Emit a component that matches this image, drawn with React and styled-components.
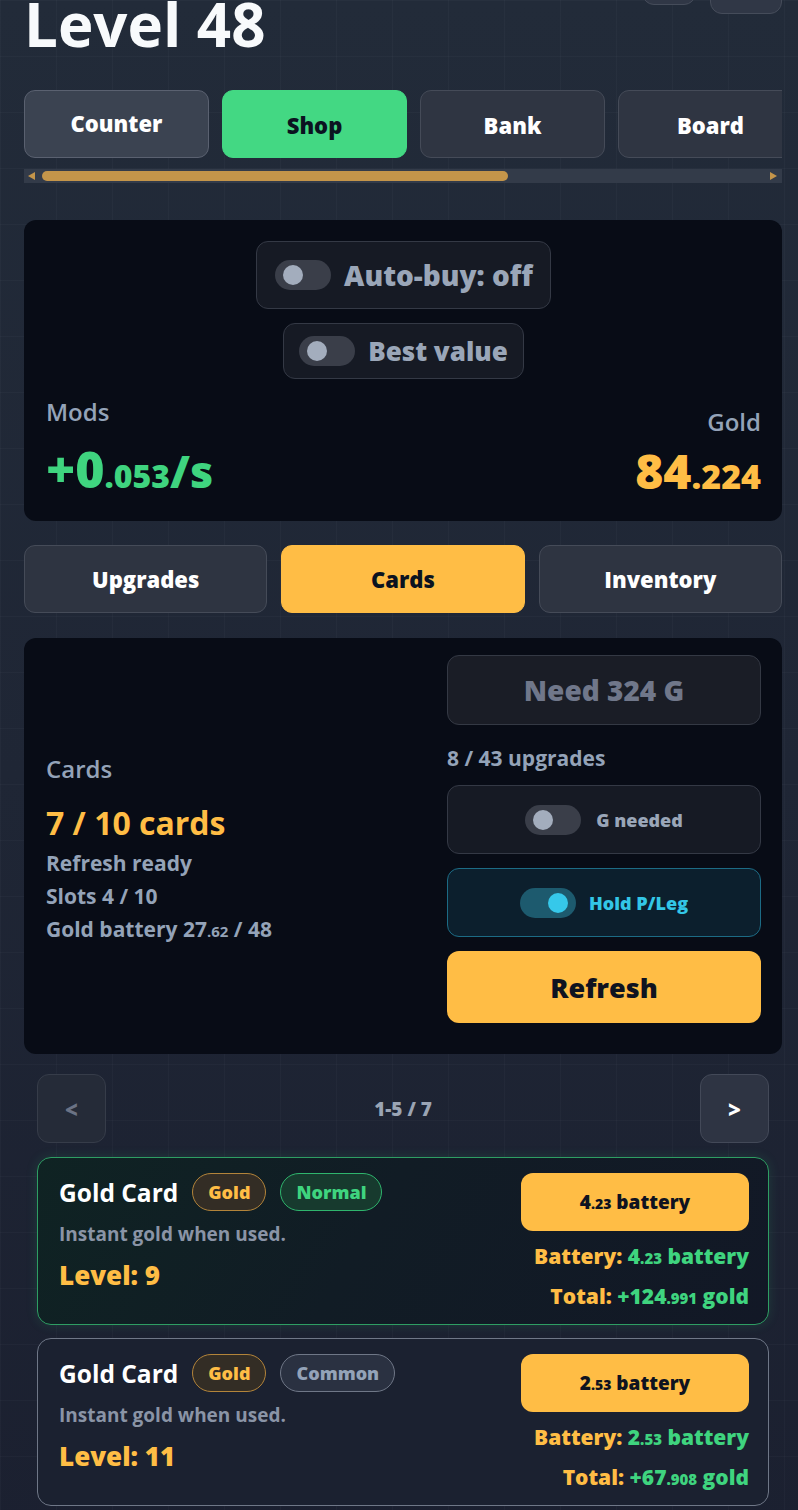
import React from 'react';
import styled, { createGlobalStyle } from 'styled-components';

const GlobalStyle = createGlobalStyle`
  html, body {
    margin: 0;
    padding: 0;
  }
  body {
    min-height: 1510px;
    font-family: "Open Sans", "Noto Sans", sans-serif;
    color: #f8fafc;
    background-color: #1e2533;
    background-image:
      linear-gradient(rgba(255, 255, 255, 0.022) 1px, transparent 1px),
      linear-gradient(90deg, rgba(255, 255, 255, 0.022) 1px, transparent 1px),
      linear-gradient(180deg, #222b39 0%, #1f2635 50%, #1b2030 100%);
    background-size: 56px 56px, 56px 56px, 100% 100%;
    overflow: hidden;
  }
  * { box-sizing: border-box; }
  button { font-family: inherit; }
`;

const GOLD = '#ffbd45';
const GREEN = '#3fd47f';
const MUTED = '#94a3b8';

const Page = styled.div`
  padding: 0 16px 40px 24px;
`;

const Header = styled.header`
  display: flex;
  justify-content: space-between;
  align-items: flex-start;
  margin-top: -6px;
`;

const Title = styled.h1`
  margin: 0;
  font-size: 60px;
  line-height: 60px;
  font-weight: 700;
  color: #f8fafc;
`;

const HeaderActions = styled.div`
  display: flex;
  gap: 14px;
  align-items: flex-start;
  margin-top: -39px;
`;

const HeaderButton = styled.button`
  width: ${p => p.$w}px;
  height: ${p => p.$h}px;
  border-radius: 12px;
  background: #303746;
  border: 1px solid #454c5a;
`;

const TabScroller = styled.nav`
  display: flex;
  gap: 13px;
  overflow: hidden;
  margin-top: 36px;
`;

const MainTab = styled.button`
  flex: 0 0 185px;
  height: 68px;
  border-radius: 11px;
  font-size: 22px;
  font-weight: 800;
  color: ${p => (p.$active ? '#0b1320' : '#ffffff')};
  background: ${p => (p.$active ? '#43d883' : p.$raised ? '#3b4351' : '#2f3542')};
  border: 1px solid ${p => (p.$active ? '#43d883' : p.$raised ? '#5a6170' : '#454b58')};
  padding-bottom: ${p => (p.$raised ? '4px' : '0')};
`;

const ScrollTrack = styled.div`
  display: flex;
  align-items: center;
  height: 14px;
  margin-top: 11px;
  padding: 0 5px 0 4px;
  background: #333b49;
`;

const Arrow = styled.span`
  width: 0;
  height: 0;
  border-top: 4px solid transparent;
  border-bottom: 4px solid transparent;
  ${p => (p.$dir === 'left' ? 'border-right: 7px solid #c4954a;' : 'border-left: 7px solid #c4954a;')}
  ${p => (p.$dir === 'right' ? 'margin-left: auto;' : '')}
`;

const Thumb = styled.span`
  width: 466px;
  height: 10px;
  margin-left: 7px;
  border-radius: 5px;
  background: #c4954a;
`;

const Panel = styled.section`
  background: #080c16;
  border-radius: 12px;
  margin-top: ${p => p.$mt}px;
`;

const ShopPanel = styled(Panel)`
  padding: 21px 21px 24px 22px;
`;

const ToggleStack = styled.div`
  display: flex;
  flex-direction: column;
  align-items: center;
  gap: 14px;
`;

const TogglePill = styled.button`
  display: inline-flex;
  align-items: center;
  gap: 13px;
  height: ${p => (p.$large ? 68 : 56)}px;
  padding: ${p => (p.$large ? '0 17px 0 18px' : '0 15px')};
  background: #161a24;
  border: 1px solid #343945;
  border-radius: 12px;
  font-size: ${p => (p.$large ? 28 : 26)}px;
  font-weight: 800;
  color: #9aa6b8;
`;

const Switch = styled.span`
  position: relative;
  flex: 0 0 56px;
  width: 56px;
  height: 30px;
  border-radius: 15px;
  background: ${p => (p.$on ? '#1d5a6e' : '#3a3e49')};

  &::after {
    content: '';
    position: absolute;
    top: 5px;
    ${p => (p.$on ? 'right: 8px;' : 'left: 8px;')}
    width: 20px;
    height: 20px;
    border-radius: 50%;
    background: ${p => (p.$on ? '#36c8ea' : '#a3adbd')};
  }
`;

const StatsRow = styled.div`
  display: flex;
  justify-content: space-between;
  align-items: flex-end;
  margin-top: 17px;
`;

const Stat = styled.div`
  display: flex;
  flex-direction: column;
  align-items: ${p => (p.$right ? 'flex-end' : 'flex-start')};
`;

const StatLabel = styled.div`
  font-size: 24px;
  line-height: 31px;
  font-weight: 600;
  color: ${MUTED};
  margin-bottom: ${p => p.$gap}px;
`;

const StatValue = styled.div`
  font-size: ${p => p.$size}px;
  line-height: 53px;
  height: 53px;
  font-weight: 800;
  color: ${p => p.$color};
  white-space: nowrap;
`;

const Sized = styled.span`
  font-size: ${p => p.$size}px;
  line-height: 1;
`;

const SubTabs = styled.div`
  display: grid;
  grid-template-columns: repeat(3, 1fr);
  gap: 14px;
  margin-top: 24px;
`;

const SubTab = styled.button`
  height: 68px;
  border-radius: 11px;
  font-size: 22px;
  font-weight: 800;
  color: ${p => (p.$active ? '#0b1320' : '#ffffff')};
  background: ${p => (p.$active ? GOLD : '#2e3441')};
  border: 1px solid ${p => (p.$active ? GOLD : '#454b58')};
`;

const CardsPanel = styled(Panel)`
  display: grid;
  grid-template-columns: 1fr 314px;
  gap: 20px;
  padding: 17px 21px 31px 22px;
`;

const CardsInfo = styled.div`
  display: flex;
  flex-direction: column;
  justify-content: center;
  padding-top: 20px;
`;

const InfoLabel = styled.div`
  font-size: 24px;
  line-height: 31px;
  font-weight: 600;
  color: ${MUTED};
`;

const CardCount = styled.div`
  margin-top: 18px;
  font-size: 32px;
  line-height: 42px;
  font-weight: 700;
  color: ${GOLD};
`;

const InfoLines = styled.div`
  margin-top: 3px;
  font-size: 21px;
  line-height: 33px;
  font-weight: 700;
  color: ${MUTED};
`;

const CardsActions = styled.div`
  display: flex;
  flex-direction: column;
  gap: 14px;
`;

const NeedButton = styled.button`
  height: 70px;
  background: #1a1d26;
  border: 1px solid #343944;
  border-radius: 12px;
  font-size: 28px;
  font-weight: 800;
  color: #70778a;
`;

const UpgradeCount = styled.div`
  padding-top: 7px;
  font-size: 21px;
  line-height: 25px;
  font-weight: 700;
  color: ${MUTED};
`;

const ToggleBox = styled.button`
  display: flex;
  align-items: center;
  justify-content: center;
  gap: ${p => (p.$on ? 13 : 15)}px;
  height: 69px;
  border-radius: 12px;
  font-size: 18px;
  font-weight: 800;
  background: ${p => (p.$on ? '#0c1f2d' : '#161a24')};
  border: 1px solid ${p => (p.$on ? '#1c6b85' : '#343945')};
  color: ${p => (p.$on ? '#33c6e6' : '#9aa6b8')};
`;

const RefreshButton = styled.button`
  height: 72px;
  background: ${GOLD};
  border: none;
  border-radius: 12px;
  font-size: 27px;
  font-weight: 800;
  color: #0f1320;
`;

const ListSection = styled.div`
  padding: 0 13px;
  margin-top: 20px;
`;

const Pager = styled.div`
  display: flex;
  justify-content: space-between;
  align-items: center;
`;

const PageButton = styled.button`
  width: 69px;
  height: 69px;
  border-radius: 12px;
  font-size: 22px;
  font-weight: 800;
  background: ${p => (p.$disabled ? '#252b38' : '#2e3443')};
  border: 1px solid ${p => (p.$disabled ? '#363c49' : '#434958')};
  color: ${p => (p.$disabled ? '#6b7385' : '#ffffff')};
`;

const PageText = styled.span`
  font-size: 19px;
  font-weight: 800;
  color: #9aa4b4;
`;

const CardList = styled.div`
  display: flex;
  flex-direction: column;
  gap: 13px;
  margin-top: 14px;
`;

const ShopCard = styled.article`
  display: flex;
  justify-content: space-between;
  padding: 15px 19px 8px 21px;
  border-radius: 14px;
  border: 1px solid ${p => (p.$highlight ? '#2e9e63' : '#6f7787')};
  background: ${p =>
    p.$highlight
      ? 'linear-gradient(120deg, #0f2323 0%, #111c25 45%, #121826 100%)'
      : '#1b2130'};
  box-shadow: ${p => (p.$highlight ? '0 0 12px rgba(52, 199, 120, 0.15)' : 'none')};
`;

const CardMain = styled.div`
  display: flex;
  flex-direction: column;
`;

const CardTitleRow = styled.div`
  display: flex;
  align-items: center;
  gap: 14px;
`;

const CardTitle = styled.h3`
  margin: 0;
  font-size: 24.5px;
  font-weight: 700;
  color: #ffffff;
`;

const badgeTones = {
  gold: { border: '#b3843a', bg: '#332d25', color: GOLD },
  normal: { border: '#2fb56d', bg: '#173a2e', color: GREEN },
  common: { border: '#6f7787', bg: '#2a3141', color: MUTED },
};

const Badge = styled.span`
  display: inline-flex;
  align-items: center;
  height: 38px;
  padding: 0 15px;
  border-radius: 19px;
  font-size: 18px;
  font-weight: 800;
  border: 1px solid ${p => badgeTones[p.$tone].border};
  background: ${p => badgeTones[p.$tone].bg};
  color: ${p => badgeTones[p.$tone].color};
`;

const CardDesc = styled.p`
  margin: 10px 0 0;
  font-size: 19px;
  line-height: 26px;
  font-weight: 700;
  color: #8a94a6;
`;

const CardLevel = styled.div`
  margin-top: 11px;
  font-size: 26px;
  line-height: 34px;
  font-weight: 800;
  color: ${GOLD};
`;

const CardSide = styled.div`
  display: flex;
  flex-direction: column;
  align-items: flex-end;
  width: 228px;
`;

const BuyButton = styled.button`
  width: 100%;
  height: 58px;
  border: none;
  border-radius: 12px;
  background: ${GOLD};
  font-size: 19px;
  font-weight: 800;
  color: #0f1320;
`;

const CardStats = styled.div`
  margin-top: 5px;
  text-align: right;
  font-size: 21px;
  line-height: 40px;
  font-weight: 800;
  white-space: nowrap;
  color: ${GOLD};
`;

const Green = styled.span`
  color: ${GREEN};
`;

const Dec = ({ int, dec, size }) => (
  <>
    {int}
    <Sized $size={size}>{dec}</Sized>
  </>
);

const cards = [
  { id: 1, rarity: 'Normal', tone: 'normal', level: 9, cost: ['4', '.23'], total: ['+124', '.991'], highlight: true },
  { id: 2, rarity: 'Common', tone: 'common', level: 11, cost: ['2', '.53'], total: ['+67', '.908'], highlight: false },
];

const mainTabs = ['Counter', 'Shop', 'Bank', 'Board', 'Stats', 'Settings'];

export default function App() {
  return (
    <>
      <GlobalStyle />
      <Page>
        <Header>
          <Title>Level 48</Title>
          <HeaderActions>
            <HeaderButton $w={54} $h={50} aria-label="menu" />
            <HeaderButton $w={72} $h={59} aria-label="settings" />
          </HeaderActions>
        </Header>

        <TabScroller>
          {mainTabs.map(tab => (
            <MainTab key={tab} $active={tab === 'Shop'} $raised={tab === 'Counter'}>
              {tab}
            </MainTab>
          ))}
        </TabScroller>
        <ScrollTrack>
          <Arrow $dir="left" />
          <Thumb />
          <Arrow $dir="right" />
        </ScrollTrack>

        <ShopPanel $mt={37}>
          <ToggleStack>
            <TogglePill $large>
              <Switch />
              Auto-buy: off
            </TogglePill>
            <TogglePill>
              <Switch />
              Best value
            </TogglePill>
          </ToggleStack>
          <StatsRow>
            <Stat>
              <StatLabel $gap={17}>Mods</StatLabel>
              <StatValue $size={45} $color={GREEN}>
                <Sized $size={50}>+0</Sized>
                <Sized $size={32}>.053</Sized>/s
              </StatValue>
            </Stat>
            <Stat $right>
              <StatLabel $gap={7}>Gold</StatLabel>
              <StatValue $size={48} $color={GOLD}>
                <Dec int="84" dec=".224" size={34} />
              </StatValue>
            </Stat>
          </StatsRow>
        </ShopPanel>

        <SubTabs>
          <SubTab>Upgrades</SubTab>
          <SubTab $active>Cards</SubTab>
          <SubTab>Inventory</SubTab>
        </SubTabs>

        <CardsPanel $mt={25}>
          <CardsInfo>
            <InfoLabel>Cards</InfoLabel>
            <CardCount>7 / 10 cards</CardCount>
            <InfoLines>
              <div>Refresh ready</div>
              <div>Slots 4 / 10</div>
              <div>
                Gold battery <Dec int="27" dec=".62" size={15} /> / 48
              </div>
            </InfoLines>
          </CardsInfo>
          <CardsActions>
            <NeedButton>Need 324 G</NeedButton>
            <UpgradeCount>8 / 43 upgrades</UpgradeCount>
            <ToggleBox>
              <Switch />
              G needed
            </ToggleBox>
            <ToggleBox $on>
              <Switch $on />
              Hold P/Leg
            </ToggleBox>
            <RefreshButton>Refresh</RefreshButton>
          </CardsActions>
        </CardsPanel>

        <ListSection>
          <Pager>
            <PageButton $disabled>&lt;</PageButton>
            <PageText>1-5 / 7</PageText>
            <PageButton>&gt;</PageButton>
          </Pager>
          <CardList>
            {cards.map(card => (
              <ShopCard key={card.id} $highlight={card.highlight}>
                <CardMain>
                  <CardTitleRow>
                    <CardTitle>Gold Card</CardTitle>
                    <Badge $tone="gold">Gold</Badge>
                    <Badge $tone={card.tone}>{card.rarity}</Badge>
                  </CardTitleRow>
                  <CardDesc>Instant gold when used.</CardDesc>
                  <CardLevel>Level: {card.level}</CardLevel>
                </CardMain>
                <CardSide>
                  <BuyButton>
                    <Dec int={card.cost[0]} dec={card.cost[1]} size={14} /> battery
                  </BuyButton>
                  <CardStats>
                    <div>
                      Battery:{' '}
                      <Green>
                        <Dec int={card.cost[0]} dec={card.cost[1]} size={15} /> battery
                      </Green>
                    </div>
                    <div>
                      Total:{' '}
                      <Green>
                        <Dec int={card.total[0]} dec={card.total[1]} size={15} /> gold
                      </Green>
                    </div>
                  </CardStats>
                </CardSide>
              </ShopCard>
            ))}
          </CardList>
        </ListSection>
      </Page>
    </>
  );
}
